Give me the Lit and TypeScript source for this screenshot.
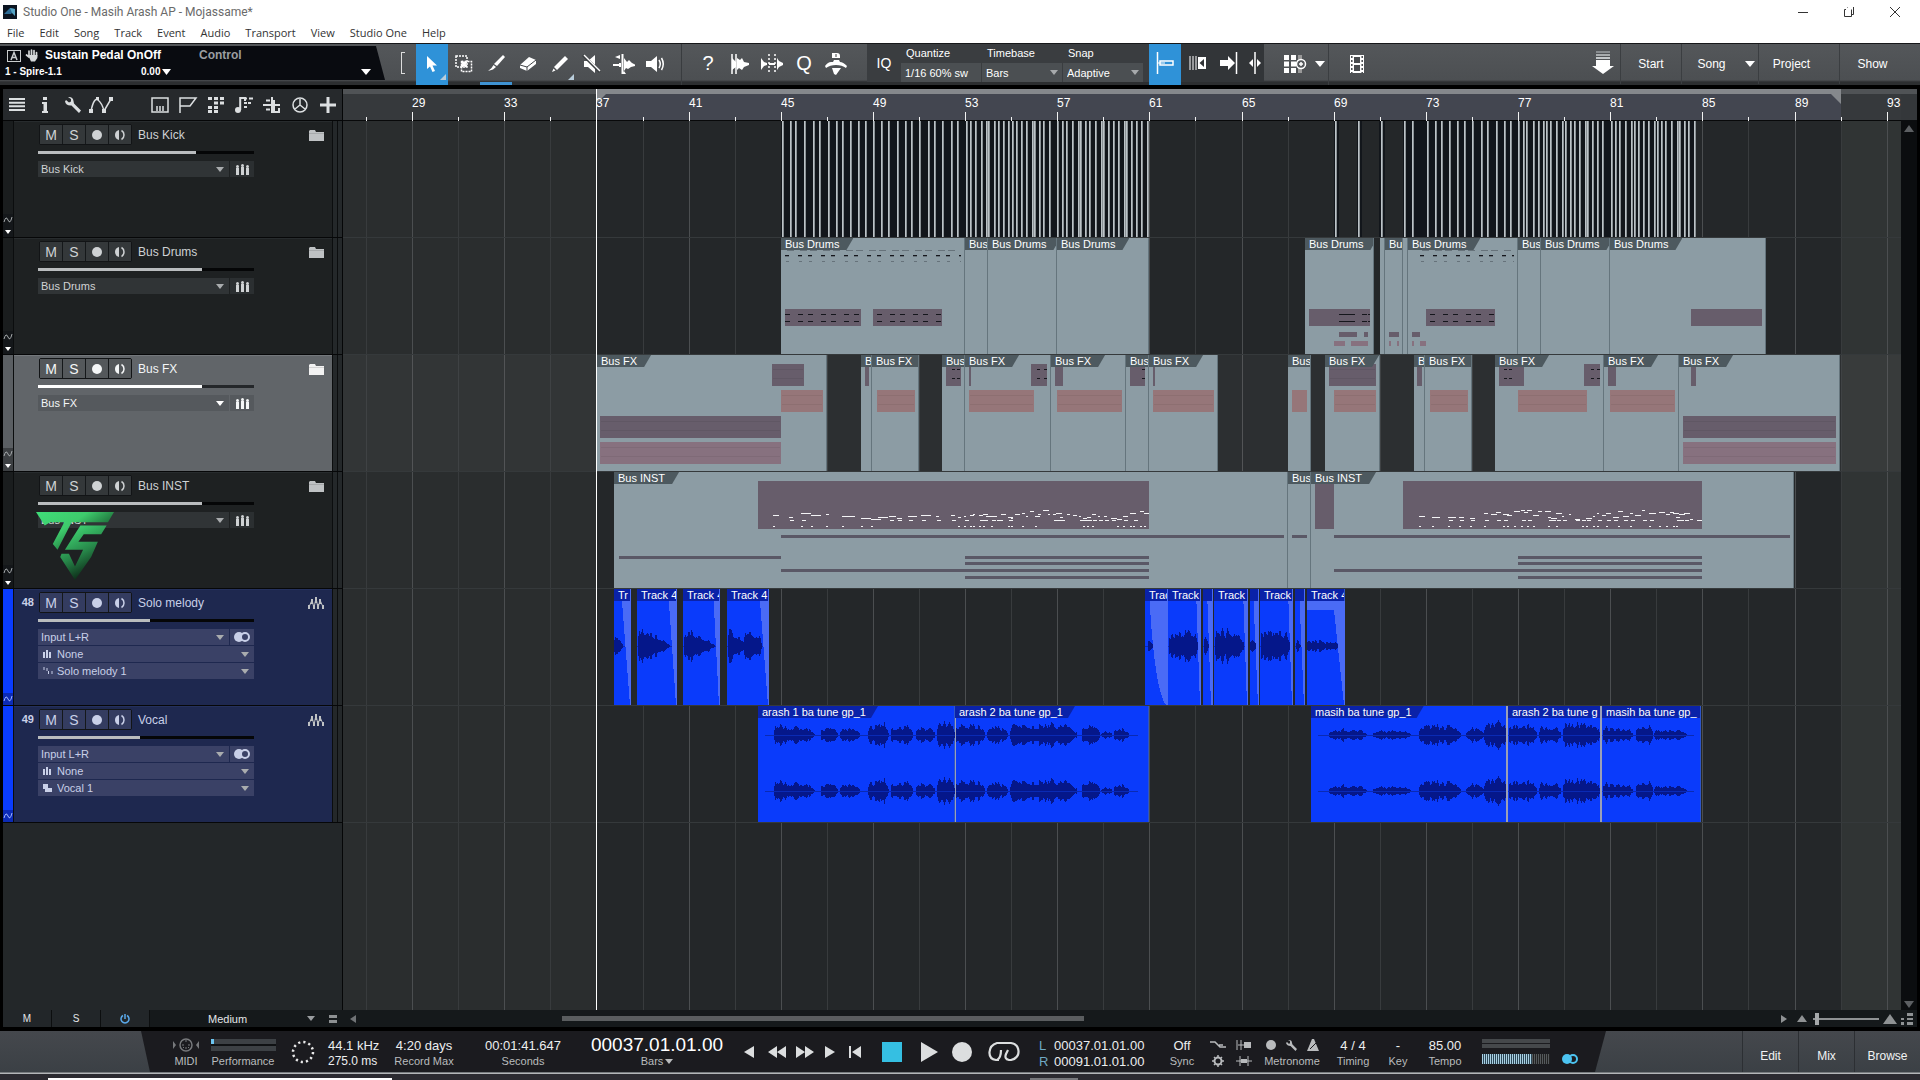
import { LitElement, html, css, svg, nothing } from "lit";
import { customElement, property, state } from "lit/decorators.js";
import { classMap } from "lit/directives/class-map.js";
import { styleMap } from "lit/directives/style-map.js";

/* ---------- song geometry ---------- */

// Song pixel shown at the left edge of the lanes, bar number found there, zoom.
const SCROLL = 343;
const FIRST_BAR = 26;
const LAST_BAR = 93;
const BAR_WIDTH = 23.04;
const barX = (bar: number) => Math.round((bar - FIRST_BAR) * BAR_WIDTH);

type Rect = [x1: number, x2: number, y1: number, y2: number, tone: string];
interface Clip { from: number; to: number; label?: string; }
interface Wave { from: number; to: number; mid: number; amp: number; decay?: boolean; }
interface Track {
  name: string; number?: number; kind: "folder" | "audio"; level: number; selected?: boolean;
  preset?: string;
}

const tracks: Track[] = [
  { name: "Bus Kick", kind: "folder", level: 73 },
  { name: "Bus Drums", kind: "folder", level: 76 },
  { name: "Bus FX", kind: "folder", level: 76, selected: true },
  { name: "Bus INST", kind: "folder", level: 76 },
  { name: "Solo melody", number: 48, kind: "audio", level: 52, preset: "wave" },
  { name: "Vocal", number: 49, kind: "audio", level: 47, preset: "steps" },
];

const kicks = [
  782, 790, 795, 804, 813, 819, 828, 836, 842, 850, 858, 865, 873, 881, 888, 897, 905, 911, 919, 928, 934, 942,
  951, 957, 966, 970, 975, 981, 986, 988, 994, 998, 1003, 1008, 1012, 1016, 1021, 1026, 1032, 1034, 1039, 1043,
  1049, 1057, 1062, 1066, 1072, 1078, 1080, 1085, 1089, 1095, 1101, 1103, 1108, 1113, 1118, 1124, 1126, 1131,
  1136, 1141, 1147, 1335, 1358, 1381, 1404, 1412, 1427, 1435, 1441, 1449, 1457, 1464, 1472, 1481, 1487, 1496,
  1504, 1510, 1518, 1523, 1526, 1533, 1538, 1543, 1546, 1550, 1556, 1562, 1565, 1570, 1574, 1579, 1585, 1587,
  1592, 1597, 1602, 1611, 1615, 1619, 1625, 1631, 1634, 1638, 1643, 1648, 1654, 1657, 1661, 1665, 1671, 1677,
  1679, 1684, 1688, 1694,
];

const clip = (from: number, to: number, label?: string): Clip => ({ from, to, label });

const drumClips = [
  clip(781, 965, "Bus Drums"), clip(965, 988, "Bus"), clip(988, 1057, "Bus Drums"), clip(1057, 1149, "Bus Drums"),
  clip(1305, 1374, "Bus Drums"), clip(1380, 1385), clip(1385, 1403, "Bu"), clip(1403, 1408),
  clip(1408, 1518, "Bus Drums"), clip(1518, 1541, "Bus"), clip(1541, 1610, "Bus Drums"), clip(1610, 1766, "Bus Drums"),
];
const fxClips = [
  clip(597, 827, "Bus FX"), clip(861, 872, "B"), clip(872, 919, "Bus FX"), clip(942, 965, "Bus"),
  clip(965, 1051, "Bus FX"), clip(1051, 1126, "Bus FX"), clip(1126, 1149, "Bus"), clip(1149, 1218, "Bus FX"),
  clip(1288, 1311, "Bus"), clip(1325, 1380, "Bus FX"), clip(1414, 1425, "B"), clip(1425, 1472, "Bus FX"),
  clip(1495, 1604, "Bus FX"), clip(1604, 1679, "Bus FX"), clip(1679, 1840, "Bus FX"),
];
const instClips = [clip(614, 1288, "Bus INST"), clip(1288, 1311, "Bus"), clip(1311, 1794, "Bus INST")];
const soloClips = [
  clip(614, 631, "Tr"), clip(637, 677, "Track 4"), clip(683, 720, "Track 4"), clip(727, 769, "Track 4"),
  clip(1145, 1168, "Trac"), clip(1168, 1201, "Track"), clip(1203, 1213), clip(1214, 1248, "Track"),
  clip(1250, 1259), clip(1260, 1293, "Track"), clip(1295, 1305), clip(1307, 1345, "Track 4"),
];
const vocalClips = [
  clip(758, 955, "arash 1 ba tune gp_1"), clip(955, 1149, "arash 2 ba tune gp_1"),
  clip(1311, 1507, "masih ba tune gp_1"), clip(1508, 1601, "arash 2 ba tune g"), clip(1602, 1701, "masih ba tune gp_"),
];

const rects = (pairs: number[][], y1: number, y2: number, tone: string): Rect[] =>
  pairs.map(([a, b]) => [a, b, y1, y2, tone]);

const drumParts: Rect[] = [
  ...rects([[785, 861], [873, 942], [1309, 1370], [1426, 1495], [1691, 1762]], 71, 88, "plum"),
  ...rects([[1339, 1357], [1364, 1368], [1389, 1399], [1412, 1420]], 94, 99, "plum"),
  ...rects([[1334, 1345], [1351, 1368], [1389, 1391], [1397, 1399], [1412, 1414], [1420, 1426]], 103, 108, "mauve"),
  ...rects([[1339, 1355], [1362, 1367], [1368, 1370]], 76, 77, "ink"),
  ...rects([[1339, 1355], [1362, 1367], [1368, 1370]], 83, 84, "ink"),
];
const fxHits = [952, 957, 1037, 1044, 1142, 1504, 1509, 1591, 1597];
const fxParts: Rect[] = [
  ...rects([[772, 804], [865, 869], [946, 961], [969, 971], [1031, 1047], [1055, 1063], [1130, 1145], [1153, 1155],
    [1329, 1376], [1417, 1422], [1499, 1524], [1584, 1600], [1608, 1616], [1691, 1696]], 9, 31, "plum"),
  ...rects([[781, 823], [877, 915], [969, 1034], [1057, 1122], [1153, 1214], [1292, 1307], [1334, 1376], [1430, 1468],
    [1518, 1587], [1610, 1675]], 35, 57, "rose"),
  ...rects([[600, 781], [1683, 1836]], 61, 83, "plum"),
  ...rects([[600, 781], [1683, 1836]], 87, 109, "mauve"),
  ...rects(fxHits.map((x) => [x, x + 3]), 14, 15, "ink"),
  ...rects(fxHits.map((x) => [x, x + 3]), 23, 24, "ink"),
];
const instParts: Rect[] = [
  ...rects([[758, 1149], [1315, 1334], [1403, 1702]], 9, 57, "plum"),
  ...rects([[781, 1284], [1292, 1307], [1334, 1790]], 63, 66, "line"),
  ...rects([[619, 781], [965, 1149], [1518, 1702]], 84, 87, "line"),
  ...rects([[965, 1149], [1518, 1702]], 90, 93, "line"),
  ...rects([[781, 1149], [1334, 1702]], 97, 100, "line"),
  ...rects([[965, 1149], [1518, 1702]], 104, 107, "line"),
];

const wave = (from: number, to: number, mid: number, amp: number, decay = false): Wave => ({ from, to, mid, amp, decay });
const soloWaves = [
  wave(614, 623, 57, 24, true), wave(638, 670, 57, 30, true), wave(684, 715, 57, 29, true),
  wave(728, 746, 57, 29, true), wave(744, 762, 57, 18), wave(1148, 1153, 57, 14, true), wave(1169, 1198, 57, 21),
  wave(1204, 1209, 57, 14, true), wave(1215, 1244, 57, 19), wave(1250, 1256, 57, 10), wave(1261, 1290, 57, 21),
  wave(1296, 1301, 57, 12, true), wave(1307, 1327, 57, 8), wave(1326, 1338, 57, 6),
];
const phrases: number[][] = [
  [774, 815, 11], [821, 838, 9], [840, 860, 9], [868, 889, 13], [891, 913, 12], [916, 935, 10], [937, 955, 19],
  [955, 985, 14], [987, 1008, 11], [1010, 1077, 14], [1082, 1100, 14], [1101, 1112, 5], [1114, 1129, 8],
  [1329, 1367, 7], [1373, 1411, 6], [1419, 1461, 12], [1466, 1484, 9], [1484, 1507, 18], [1509, 1537, 14],
  [1539, 1561, 11], [1563, 1601, 16], [1603, 1633, 10], [1636, 1653, 14], [1654, 1687, 8],
];
const vocalWaves = phrases.flatMap(([a, b, amp]) => [wave(a, b, 29, amp), wave(a, b, 85, amp)]);

/** Repeatable noise in 0..1 for a song pixel. */
const noise = (n: number) => {
  const v = Math.sin(n * 12.9898 + 4.1) * 43758.5453;
  return v - Math.floor(v);
};

const waveShape = (w: Wave) => {
  const top: string[] = [];
  const bottom: string[] = [];
  const len = w.to - w.from;
  for (let i = 0; i <= len; i++) {
    const t = i / len;
    const env = w.decay ? Math.min(1, t * 6 + 0.35) * Math.pow(1 - t, 0.8) : Math.min(1, t * 8 + 0.5, (1 - t) * 5 + 0.2);
    const a = Math.max(1, Math.round(w.amp * env * (0.4 + 0.6 * Math.pow(noise(w.from + i), 2.2))));
    top.push(`${w.from + i},${w.mid - a}`);
    bottom.unshift(`${w.from + i},${w.mid + a}`);
  }
  return svg`<polygon class="wave" points=${[...top, ...bottom].join(" ")} />`;
};

/** Melody thumbnail: sparse phrases first, a busier line from `dense` on. */
const noteMarks = (from: number, to: number, dense: number) => {
  const out = [];
  let x = from;
  let n = from;
  while (x < to - 3) {
    const busy = x > dense;
    const drift = Math.round(Math.sin(x / 19) * 2);
    const len = 2 + Math.floor(noise(n) * (busy ? 5 : 9));
    const y = 46 + drift - Math.floor(noise(n + 3) * (busy ? 7 : 4));
    out.push(svg`<rect class="note" x=${x} y=${y} width=${Math.min(len, to - x)} height="1" />`);
    if (noise(n + 11) > 0.5) out.push(svg`<rect class="note" x=${x + 1} y="48" width=${Math.min(4, to - x - 1)} height="1" />`);
    if (noise(n + 5) > 0.55) out.push(svg`<rect class="note" x=${x} y="54" width="2" height="1" />`);
    x += busy ? 3 + Math.floor(noise(n + 9) * 5) : 7 + Math.floor(noise(n + 9) * 10);
    n++;
  }
  return out;
};

/** The paired hits that repeat once per bar. */
const hits = (from: number, to: number, y: number, w: number, tone: string) => {
  const out = [];
  for (let x = from; x < to; x += 23) {
    out.push(svg`<rect class=${tone} x=${x} y=${y} width=${Math.min(w, to - x)} height="1" />`);
    if (x + 13 < to) out.push(svg`<rect class=${tone} x=${x + 13} y=${y} width=${Math.min(w, to - x - 13)} height="1" />`);
  }
  return out;
};

/* ---------- icons ---------- */

const icon = (w: number, h: number, body: unknown) =>
  html`<svg class="icon" width=${w} height=${h} viewBox="0 0 ${w} ${h}" aria-hidden="true">${body}</svg>`;
const caret = (w = 8, h = 5) => icon(w, h, svg`<path fill="currentColor" d="M0 0H${w}L${w / 2} ${h}Z" />`);

const F = "currentColor";
const icons = {
  app: icon(14, 14, svg`<rect width="14" height="14" fill="#0b1420"/><path d="M1 9 7 3l5 1-4 5Z" fill="#2b6a94"/><path d="M7 3l5 1v7l-3-3Z" fill="#55a3c4"/>`),
  min: icon(10, 10, svg`<path d="M0 5.500H10" stroke=${F}/>`),
  restore: icon(10, 10, svg`<path d="M3.500 1V.5M.5 2.500V9.500H7.500V2.500M2 2.500H.5M9.500 0V7.500H8" fill="none" stroke=${F}/>`),
  close: icon(10, 10, svg`<path d="M0 0 10 10M10 0 0 10" stroke=${F}/>`),
  boxA: icon(14, 12, svg`<rect x=".5" y=".5" width="13" height="11" fill="none" stroke="#c9ccce"/><path d="M4 10 7 2.500 10 10M5 7.500H9" fill="none" stroke="#c9ccce" stroke-width="1.500"/>`),
  hand: icon(14, 13, svg`<path d="M4 7V2M6.500 6V1M9 6V1.500M11.500 7V3.500M4 8 1.500 6" stroke="#d5d8da" stroke-width="1.700" stroke-linecap="round"/><path d="M3 6H12.400V9L10 12.500H6Z" fill="#d5d8da"/>`),
  arrow: icon(12, 18, svg`<path d="M1 1V14L4 11.500 6.500 17 9 16 6.500 10.500H11Z" fill="#fff"/>`),
  range: icon(18, 18, svg`<rect x="1" y="1" width="11" height="11" fill="none" stroke=${F} stroke-width="1.500" stroke-dasharray="2 1"/><rect x="6.500" y="6.500" width="10" height="10" fill="none" stroke=${F} stroke-width="1.500" stroke-dasharray="2 1"/><path d="M6.500 6.500 11.500 11.500M11.500 6.500 6.500 11.500" stroke=${F} stroke-width="2.500"/>`),
  split: icon(18, 18, svg`<path d="M16 1 18 3 10 12 7 10Z" fill=${F}/><path d="M6.500 11 9 13 6 15.500 1 17 4.500 14Z" fill=${F}/>`),
  eraser: icon(18, 16, svg`<path d="M1 9 10 1 17 4V8L8 15 1 12Z" fill=${F}/><path d="M1 9 8 11 17 4M8 11V15" stroke="#404346" fill="none"/>`),
  pencil: icon(18, 18, svg`<path d="M14 1 17 4 6 15 3 12Z" fill=${F}/><path d="M2.500 13.500 4.500 15.500 1 17Z" fill=${F}/>`),
  mute: icon(18, 18, svg`<path d="M1 6H5L12 0V18L5 12H1Z" fill=${F}/><path d="M0 0 17 17" stroke="#3d4043" stroke-width="3"/><path d="M1 0 17 16" stroke=${F} stroke-width="1.500"/>`),
  bend: icon(22, 20, svg`<path d="M0 11H7M7 9V13M9.500 0V20" stroke=${F} stroke-width="2"/><path d="M2 3 7 1V5Z M11 4 14 8 16 6 19 9 22 10.500V12L18 13 15 15 13 14 11 17Z M9 20 13 20 11 17Z" fill=${F}/>`),
  speaker: icon(20, 18, svg`<path d="M0 6H5L11 1V17L5 12H0Z" fill=${F}/><path d="M13 5Q15.500 9 13 13M15.500 3Q19 9 15.500 15" fill="none" stroke=${F} stroke-width="1.500"/>`),
  strip: icon(18, 20, svg`<path d="M1 0V20M5 0V20" stroke=${F} stroke-width="1.500"/><path d="M1 4 5 8V13L1 16Z M6 4 9 6 11 4 13 8 18 9V11L13 13 11 16 8 14 6 16Z" fill=${F}/>`),
  stretch: icon(22, 20, svg`<path d="M0 4 3 8 6 9V11L3 12 0 16Z M16 4 18 7 22 9V11L18 13 16 16Z" fill=${F}/><path d="M8 0V20M14 0V20" stroke=${F} stroke-width="1.500" stroke-dasharray="2 2"/><path d="M8 10H14" stroke=${F} stroke-width="2"/>`),
  macro: icon(22, 22, svg`<path d="M7 0H12Q15 0 15 3V5H7Z M0 13Q3 9 6 9H8L9 7H14L15 9Q18 9 22 13L21 15Q17 12 11 12T1 15Z M7 15H16L11 22 9 21Z" fill=${F}/><path d="M11 1V4" stroke="#404346"/>`),
  snapLine: icon(18, 22, svg`<path d="M1.500 0V22" stroke="#fff" stroke-width="1.500"/><rect x="4" y="9" width="13" height="4" fill="none" stroke="#fff" stroke-width="1.500"/><path d="M2 11H9" stroke="#fff"/>`),
  snapBars: icon(17, 14, svg`<path d="M1 0V14M4 0V14M7 0V14" stroke=${F} stroke-width="1"/><path d="M9 1H17V13H9Z" fill=${F}/><path d="M15 3V11L10.500 7Z" fill="#303336"/>`),
  snapArrow: icon(18, 22, svg`<path d="M0 8H8V4L15 11 8 18V14H0Z" fill=${F}/><path d="M16.500 0V22" stroke=${F} stroke-width="1.500"/>`),
  snapBoth: icon(12, 22, svg`<path d="M6 0V22" stroke=${F} stroke-width="1.500"/><path d="M4 7V15L0 11Z M8 7V15L12 11Z" fill=${F}/>`),
  grid: icon(22, 18, svg`<path d="M0 0H5V5H0Z M7 0H12V5H7Z M0 6.500H5V11.500H0Z M7 6.500H12V11.500H7Z M0 13H5V18H0Z M7 13H12V18H7Z" fill=${F}/><path d="M14 0H18V5H14Z M14 13H18V18H14Z" fill="#999"/><circle cx="17" cy="9" r="4.500" fill="#54575a" stroke=${F} stroke-width="1.500"/><path d="M15 9H19M17 7V11" stroke=${F} stroke-width="1.500"/>`),
  film: icon(14, 18, svg`<path d="M0 0H14V18H0Z" fill=${F}/><path d="M4 2H10V8H4Z M4 10H10V16H4Z" fill="#484b4e"/><path d="M1.800 1V18M12.200 1V18" stroke="#484b4e" stroke-dasharray="2 2" stroke-width="1.500"/>`),
  drop: icon(22, 24, svg`<path d="M4 0H18V2H4Z" fill="#888c8f"/><path d="M4 3H18V5H4Z" fill="#a8acae"/><path d="M4 6H18V8H4Z" fill="#c4c8ca"/><path d="M4 9H18V15H22L11 23 0 15H4Z" fill="#fff"/>`),
  lines: icon(16, 13, svg`<path d="M0 1H16M0 4.700H16M0 8.300H16M0 12H16" stroke=${F} stroke-width="2"/>`),
  info: icon(6, 16, svg`<path d="M1 0H5V3H1Z M0 5H5V14H6V16H0V14H1.500V7H0Z" fill=${F}/>`),
  wrench: icon(16, 16, svg`<path d="M1 3 4 5.500 6 4.500V2L3 0Q8-.5 8.500 4L9 6.500 16 13.500 14 16 6.500 8.500Q1 9 0 4.500Z" fill=${F}/>`),
  curve: icon(24, 16, svg`<path d="M2 14Q5 0 9 3T15 14L22 2" fill="none" stroke=${F} stroke-width="1.500"/><path d="M0 12H4V16H0Z M7 0H10V3H7Z M13 12H17V16H13Z M20 0H24V4H20Z" fill=${F}/>`),
  keys: icon(18, 16, svg`<rect x="1" y="1" width="16" height="14" fill="none" stroke=${F} stroke-width="1.500"/><path d="M6 9V14M9 9V14M12 9V14" stroke=${F} stroke-width="1.500"/>`),
  flag: icon(18, 16, svg`<path d="M1 16V1H17L11 9H1" fill="none" stroke=${F} stroke-width="1.500"/>`),
  blocks: icon(16, 16, svg`<path d="M0 0H4V3H0Z M6 0H10V3H6Z M12 0H16V3H12Z M6 4.500H10V7.500H6Z M12 4.500H16V7.500H12Z M0 9H4V12H0Z M6 9H10V12H6Z M0 13H4V16H0Z M6 13H10V16H6Z" fill=${F}/>`),
  note: icon(18, 16, svg`<circle cx="3" cy="13" r="3" fill=${F}/><path d="M5.200 13V0M5 1H10V4M10 1.500H12M14 1.500H18M9 6H12M13 6H16M9 10H12" stroke=${F} stroke-width="2" fill="none"/>`),
  lanes: icon(18, 16, svg`<path d="M0 8H17M3 3.500H7M3 12.500H7M9 0V16" stroke=${F} stroke-width="2"/><path d="M11 3V15H16V11" fill="none" stroke=${F} stroke-width="2"/>`),
  clock: icon(16, 16, svg`<circle cx="8" cy="8" r="7" fill="none" stroke=${F} stroke-width="1.500"/><path d="M8 2V8L3 12M8 8 13 12" fill="none" stroke=${F} stroke-width="1.500"/>`),
  plus: icon(16, 16, svg`<path d="M8 0V16M0 8H16" stroke=${F} stroke-width="3"/>`),
  dot: icon(10, 10, svg`<circle cx="5" cy="5" r="5" fill=${F}/>`),
  monitor: icon(10, 10, svg`<path d="M4 0V10Q0 9 0 5T4 0Z" fill=${F}/><path d="M6.500.5Q9 2 9 5T6.500 9.500" fill="none" stroke=${F} stroke-width="1.500"/>`),
  folder: icon(15, 11, svg`<path d="M0 1 1 0H6L7 2H15V11H0Z" fill=${F}/><path d="M0 3.500H15" stroke="#000" stroke-opacity=".12"/>`),
  spectrum: icon(16, 14, svg`<path d="M1 13V9M4 8V3M6 9V13M8 7V1M10 13V8M12 8V3M15 13V9" stroke=${F} stroke-width="2"/><path d="M1 11 4 4 6 12 8 2 10 12 12 4 15 11" fill="none" stroke=${F}/>`),
  faders: icon(13, 11, svg`<path d="M0 4H3V11H0Z M5 3H8V11H5Z M10 4H13V11H10Z" fill=${F}/><circle cx="1.500" cy="2.500" r="1.500" fill=${F}/><circle cx="6.500" cy="1.500" r="1.500" fill=${F}/><circle cx="11.500" cy="2.500" r="1.500" fill=${F}/>`),
  stereo: icon(16, 10, svg`<circle cx="5" cy="5" r="5" fill=${F}/><circle cx="11" cy="5" r="4" fill="#3a4166" stroke=${F} stroke-width="2"/>`),
  smallFaders: icon(8, 8, svg`<path d="M0 2H2V8H0Z M3 0H5V8H3Z M6 2H8V8H6Z" fill=${F}/>`),
  sparks: icon(10, 8, svg`<path d="M1 0V3M4 1V4M5.500 4V7M9 4V7" stroke=${F} stroke-width="1"/>`),
  steps: icon(10, 8, svg`<path d="M0 0H5V4H9V8H2V5H0Z" fill=${F}/>`),
  zig: icon(8, 6, svg`<path d="M0 5Q2-2 4 3T8 0" fill="none" stroke=${F}/>`),
  power: icon(10, 10, svg`<path d="M3 1.500A4 4 0 1 0 7 1.500M5 0V5" fill="none" stroke="#5aa9ea" stroke-width="1.500"/>`),
  list: icon(8, 8, svg`<path d="M0 0H8V3H0Z M0 5H8V8H0Z" fill=${F}/>`),
  left: icon(6, 8, svg`<path d="M6 0V8L0 4Z" fill=${F}/>`),
  right: icon(6, 8, svg`<path d="M0 0V8L6 4Z" fill=${F}/>`),
  up: icon(10, 7, svg`<path d="M0 7H10L5 0Z" fill=${F}/>`),
  upBig: icon(14, 10, svg`<path d="M0 10H14L7 0Z" fill=${F}/>`),
  corner: icon(12, 12, svg`<path d="M6 0H12V3H6Z M6 5H12V7H6Z M0 9H3V12H0Z M0 5H3V7H0Z M6 9H12V12H6Z" fill=${F}/>`),
  midi: icon(26, 14, svg`<circle cx="13" cy="7" r="6" fill="none" stroke=${F} stroke-width="1.500"/><path d="M0 3 3 7 0 11Z M26 3 23 7 26 11Z" fill=${F}/><path d="M9 7H11M15 7H17M10 10 11 9M15 9 16 10M13 9V11M12 3H14" stroke=${F}/>`),
  ring: icon(26, 26, svg`<circle cx="13" cy="13" r="10" fill="none" stroke="#e8e8e8" stroke-width="2.500" stroke-dasharray="2.200 3.036"/>`),
  back: icon(10, 12, svg`<path d="M10 0V12L0 6Z" fill=${F}/>`),
  rew: icon(18, 12, svg`<path d="M9 0V12L0 6Z M18 0V12L9 6Z" fill=${F}/>`),
  fwd: icon(18, 12, svg`<path d="M0 0V12L9 6Z M9 0V12L18 6Z" fill=${F}/>`),
  next: icon(10, 12, svg`<path d="M0 0V12L10 6Z" fill=${F}/>`),
  start: icon(12, 12, svg`<path d="M12 0V12L3 6Z M0 0H2V12H0Z" fill=${F}/>`),
  stop: icon(20, 20, svg`<rect width="20" height="20" fill="#35bfe2"/>`),
  play: icon(17, 20, svg`<path d="M0 0V20L17 10Z" fill=${F}/>`),
  record: icon(20, 20, svg`<circle cx="10" cy="10" r="10" fill=${F}/>`),
  loop: icon(32, 22, svg`<path d="M11 19H8Q1 18 1.500 11T9 2H23Q30 3 30.500 10T23 19H21Q16 18 18 13L20 9M9 19Q13 17 13 9" fill="none" stroke=${F} stroke-width="2.200"/>`),
  sync1: icon(16, 8, svg`<path d="M0 1H5L10 6H16M9 4H13" fill="none" stroke=${F} stroke-width="1.500"/>`),
  sync2: icon(16, 10, svg`<path d="M1 0V10M5 0V10M2 5H8" stroke=${F}/><path d="M8 2H15V8H8Z" fill=${F}/>`),
  gear: icon(12, 12, svg`<circle cx="6" cy="6" r="3.500" fill="none" stroke=${F} stroke-width="2"/><path d="M6 0V2M6 10V12M0 6H2M10 6H12M2 2 3 3M9 9 10 10M10 2 9 3M3 9 2 10" stroke=${F} stroke-width="1.500"/>`),
  punch: icon(16, 10, svg`<path d="M0 5H16M4 0V10M12 0V10" stroke=${F}/><path d="M5 3H11V7H5Z" fill=${F}/>`),
  tool: icon(11, 11, svg`<path d="M1 2 3 4 4 3V1L2 0Q6-.5 6 3L6.500 4.500 11 9 9.500 11 4.500 6Q1 6 0 3Z" fill=${F}/>`),
  click: icon(12, 12, svg`<path d="M5 0H7L12 12H0Z" fill=${F}/><path d="M3 10 10 3" stroke="#1b1b1f"/>`),
  phones: icon(16, 10, svg`<circle cx="5" cy="5" r="5" fill="#4cc3f0"/><circle cx="11" cy="5" r="4" fill="none" stroke="#4cc3f0" stroke-width="2"/>`),
};

/* ---------- lane content ---------- */

const laneBodies = [
  () => svg`
    <rect class="pit" x="781" y="0" width="368" height="116" />
    <rect class="pit" x="1334" y="0" width="5" height="116" /><rect class="pit" x="1357" y="0" width="5" height="116" />
    <rect class="pit" x="1379" y="0" width="6" height="116" /><rect class="pit" x="1403" y="0" width="292" height="116" />
    ${kicks.map((x) => svg`<rect class="kick" x=${x} y="0" width="1" height="116" /><rect class="kick soft" x=${x + 1} y="0" width="1" height="116" />`)}`,
  () => svg`${bodies(drumClips)}${parts(drumParts)}
    ${hits(785, 859, 76, 5, "ink")}${hits(785, 859, 83, 5, "ink")}${hits(877, 942, 76, 5, "ink")}${hits(877, 942, 83, 5, "ink")}
    ${hits(1430, 1495, 76, 5, "ink")}${hits(1430, 1495, 83, 5, "ink")}
    ${hits(787, 961, 12, 7, "dash")}${hits(785, 961, 17, 4, "ink")}${hits(785, 961, 18, 4, "dash")}${hits(786, 961, 23, 3, "dash")}
    ${hits(1422, 1514, 12, 7, "dash")}${hits(1420, 1514, 17, 4, "ink")}${hits(1420, 1514, 18, 4, "dash")}${hits(1421, 1514, 23, 3, "dash")}`,
  () => svg`${bodies(fxClips)}${parts(fxParts)}
    ${fxParts.filter((r) => r[4] !== "ink" && r[1] - r[0] > 26).map(([a, b, y]) =>
      svg`<path class="seam" d="M${a + 1} ${y + 5}.500H${b - 1}M${a + 1} ${y + 14}.500H${b - 1}" />`)}`,
  () => svg`${bodies(instClips)}${parts(instParts)}${noteMarks(773, 1149, 945)}${noteMarks(1419, 1702, 1480)}`,
  () => svg`${bodies(soloClips, "blue")}
    ${soloClips.map(({ from, to }) => svg`<path class="mid" d="M${from} 57.500H${to}" />`)}
    <path class="fade" d="M621 0H631V116H630Z M668 0H677V116H676Z M713 0H720V116H719Z M759 0H769V116H768Z" />
    <path class="fade" d="M1149 0H1168V116H1166Q1154 100 1149 0Z M1196 0H1201V116H1200Z M1207 0H1213V116H1211Z M1243 0H1248V116H1247Z" />
    <path class="fade" d="M1253 0H1259V116H1258Z M1288 0H1293V116H1292Z M1299 0H1305V116H1304Z M1307 12H1345V116H1344L1334 21H1307Z" />
    ${soloWaves.map(waveShape)}`,
  () => svg`${bodies(vocalClips, "blue")}${vocalWaves.map(waveShape)}
    <path class="mid" d="M765 29.500H1138M765 85.500H1138M1318 29.500H1694M1318 85.500H1694" />
    <path class="cut" d="M955 0H956V116H955Z M1506 0H1508V116H1506Z M1600 0H1602V116H1600Z" />`,
];
const laneClips: Clip[][] = [[], drumClips, fxClips, instClips, soloClips, vocalClips];

function bodies(clips: Clip[], tone = "grey") {
  return clips.map(({ from, to }) => svg`
    <rect class=${tone} x=${from} y="0" width=${to - from} height="116" />
    <rect class="${tone}-edge" x=${to - 1} y="0" width="1" height="116" />`);
}
function parts(list: Rect[]) {
  return list.map(([a, b, y1, y2, tone]) => svg`<rect class=${tone} x=${a} y=${y1} width=${b - a} height=${y2 - y1} />`);
}

const base = css`
  * { box-sizing: border-box; }
  :host { font-family: "Liberation Sans", Arial, sans-serif; font-size: 12px; color: #dfe2e4; }
  button, select, input { font: inherit; color: inherit; margin: 0; padding: 0; border: 0; background: none; border-radius: 0; }
  button { display: flex; align-items: center; justify-content: center; cursor: pointer; }
  select { appearance: none; width: 100%; min-width: 0; }
  .icon { display: block; flex: none; overflow: visible; }
  .field { display: grid; align-items: center; min-width: 0; }
  .field > * { grid-area: 1 / 1; }
  .field > .icon { justify-self: end; pointer-events: none; }
`;

/* ---------- track header ---------- */

@customElement("track-header")
class TrackHeader extends LitElement {
  @property({ attribute: false }) track!: Track;

  static styles = [base, css`
    :host { display: block; }
    .row { display: grid; grid-template-columns: 10px 1fr 4px 4px; column-gap: 1px; height: 117px; background: #0b0d0e; border-bottom: 1px solid #060708; }
    .strip { display: flex; flex-direction: column; justify-content: flex-end; background: #1a1d1e; color: #a5a9ab; }
    .mini { height: 12px; width: 10px; background: #14171a; color: #a5a9ab; }
    .mini.open { color: #fff; height: 11px; }
    .gap { background: #24282a; }
    .body { display: grid; grid-template-columns: 20px 216px 1fr; column-gap: 4px; background: #1e2122; align-content: start; padding: 2px 8px 0 0; color: #cfd2d4; border-top: 1px solid #272b2d; }
    .audio .body { background: #1e284f; color: #c9d0e8; border-top-color: #24305c; }
    .audio .strip { background: #0a3cff; }
    .audio .mini { background: #0c2bb5; color: #9fb4ff; }
    .selected .body { background: #616569; color: #f4f6f7; border-top-color: #74787c; }
    .selected .strip { background: #5b5f63; }
    .selected .mini { background: #3c3f42; }
    .number { font-size: 11px; font-weight: 700; text-align: right; line-height: 21px; }
    .main { display: flex; flex-direction: column; }
    .top { display: flex; gap: 6px; align-items: center; height: 21px; }
    .buttons { display: flex; gap: 1px; background: #15181a; border: 1px solid #121416; border-radius: 2px; margin-left: 1px; }
    .buttons button { width: 22px; height: 19px; background: #34383a; font-size: 14px; }
    .audio .buttons button { background: #343c60; }
    .selected .buttons button { background: #54585b; }
    .name { white-space: nowrap; }
    .level { appearance: none; display: block; width: 216px; height: 3px; margin: 6px 0 7px; background: linear-gradient(90deg, #b9bcbe var(--level), #050607 var(--level)); }
    .selected .level { background: linear-gradient(90deg, #fff var(--level), #24272a var(--level)); }
    .level::-webkit-slider-thumb { appearance: none; width: 4px; height: 3px; background: transparent; }
    .slots { display: flex; flex-direction: column; gap: 1px; font-size: 11px; }
    .slot { display: flex; gap: 1px; height: 16px; }
    .slot .field { flex: 1; background: #303436; padding: 0 5px 0 3px; }
    .slot .field.iconed select { padding-left: 16px; }
    .slot .field > .icon.icon { color: #a9acae; }
    .slot .field > .kind { justify-self: start; pointer-events: none; padding-left: 2px; }
    .slot button { width: 24px; background: #2b2f31; }
    .audio .slot .field, .audio .slot button { background: #3a4166; }
    .selected .slot .field, .selected .slot button { background: #55595d; }
    .selected .slot .field > .icon.icon { color: #fff; }
    .side { display: flex; justify-content: flex-end; height: 22px; align-items: center; color: #bfc2c4; }
    .selected .side { color: #f2f2f2; }
  `];

  private slotRow(label: string, value: string, kind?: unknown, button?: unknown) {
    return html`<div class="slot">
      <div class=${classMap({ field: true, iconed: !!kind })}>
        <select aria-label=${label}><option>${value}</option></select>
        ${kind ? html`<span class="kind">${kind}</span>` : nothing}
        ${caret()}
      </div>
      ${button ?? nothing}
    </div>`;
  }

  render() {
    const t = this.track;
    const audio = t.kind === "audio";
    return html`<div class=${classMap({ row: true, audio, selected: !!t.selected })}>
      <div class="strip">
        <button class="mini" aria-label="Show automation of ${t.name}">${icons.zig}</button>
        ${audio ? nothing : html`<button class="mini open" aria-label="Open ${t.name}">${caret(6, 4)}</button>`}
      </div>
      <div class="body">
        <span class="number">${t.number ?? ""}</span>
        <div class="main">
          <div class="top">
            <div class="buttons">
              <button aria-label="Mute ${t.name}">M</button><button aria-label="Solo ${t.name}">S</button>
              <button aria-label="Record ${t.name}">${icons.dot}</button><button aria-label="Monitor ${t.name}">${icons.monitor}</button>
            </div>
            <span class="name">${t.name}</span>
          </div>
          <input class="level" type="range" min="0" max="100" .value=${String(t.level)} aria-label="Volume of ${t.name}" style=${styleMap({ "--level": `${t.level}%` })} />
          <div class="slots">
            ${audio
              ? html`${this.slotRow("Input", "Input L+R", undefined, html`<button aria-label="Stereo">${icons.stereo}</button>`)}
                  ${this.slotRow("Instrument", "None", icons.smallFaders)}
                  ${this.slotRow("Take layer", `${t.name} 1`, t.preset === "wave" ? icons.sparks : icons.steps)}`
              : this.slotRow("Bus", t.name, undefined, html`<button aria-label="Channel of ${t.name}">${icons.faders}</button>`)}
          </div>
        </div>
        <div class="side">${audio ? icons.spectrum : icons.folder}</div>
      </div>
      <div class="gap"></div><div class="gap"></div>
    </div>`;
  }
}

/* ---------- arrangement ---------- */

@customElement("arrange-view")
class ArrangeView extends LitElement {
  static styles = [base, css`
    :host { display: flex; flex-direction: column; position: relative; min-width: 0; overflow: hidden; background: #242729; }
    .ruler { position: relative; height: 32px; flex: none; background: linear-gradient(#505356 0 5px, #36393c 5px 31px, #08090a 31px); overflow: hidden; }
    .loop { position: absolute; top: 0; height: 31px; background: linear-gradient(#85888c 0 5px, #434650 5px); }
    .marks { position: absolute; inset: 0; width: 100%; height: 100%; }
    .tick { fill: #f2f2f2; }
    .handle { fill: #85888c; }
    .bar { position: absolute; top: 7px; line-height: 14px; font-size: 12px; color: #fff; }
    .canvas { position: relative; flex: 1; display: flex; flex-direction: column; }
    .grid { position: absolute; inset: 0; width: 100%; height: 100%; }
    .grid .minor { fill: #383b3d; }
    .grid .major { fill: #4b4e50; }
    .outer { fill: #2a2d2e; }
    .tail { fill: #303434; }
    .lane { position: relative; height: 117px; border-bottom: 1px solid #35393b; overflow: hidden; }
    .lane.selected { background: rgb(255 255 255 / 4%); }
    .art { position: absolute; inset: 0; width: 100%; height: 116px; shape-rendering: crispEdges; }
    .grey { fill: #8c9ca4; } .grey-edge { fill: #65757d; }
    .blue { fill: #0a3bfb; } .blue-edge { fill: #2e56c8; }
    .plum { fill: #675d6b; } .mauve { fill: #87717f; } .rose { fill: #967679; } .line { fill: #5a5866; }
    .ink { fill: #15161c; } .dash { fill: #66727a; } .note { fill: #f4f4f6; }
    .seam { stroke: #000; stroke-opacity: .06; }
    .pit { fill: #12161b; } .kick { fill: #bcc3c7; } .kick.soft { fill: #8a9195; }
    .wave { fill: #05178a; } .mid { stroke: #0a2ab4; } .fade { fill: #4a6bf6; } .cut { fill: #9aa0b8; }
    .tag { position: absolute; top: 0; height: 12px; overflow: hidden; font-size: 11px; line-height: 12px; white-space: nowrap; color: #fff; }
    .tag span { display: inline-block; height: 12px; padding: 0 14px 0 4px; background: #4d595f; clip-path: polygon(0 0, 100% 0, calc(100% - 7px) 100%, 0 100%); vertical-align: top; }
    .tag.audio span { background: #0a22a8; padding-right: 12px; }
    .tag.tight { background: #4d595f; }
    .tag.tight span { padding-right: 0; clip-path: none; background: none; }
    .tag.audio.tight { background: #0a22a8; }
    .playhead { position: absolute; top: 0; bottom: 0; width: 1px; background: #fff; }
  `];

  render() {
    const bars: number[] = [];
    for (let b = 27; b <= LAST_BAR; b += 2) bars.push(b);
    const major = (b: number) => (b - 29) % 4 === 0;
    const start = barX(37);
    const end = barX(91);
    return html`
      <div class="ruler">
        <div class="loop" style=${styleMap({ left: `${start}px`, width: `${end - start}px` })}></div>
        <svg class="marks" aria-hidden="true">
          <path class="handle" d="M${start} 5h10l-10 10Z M${end} 5h-10l10 10Z" />
          ${bars.map((b) => svg`<rect class="tick" x=${barX(b)} y=${major(b) ? 23 : 28} width="1" height="9" />`)}
        </svg>
        ${bars.filter(major).map((b) => html`<span class="bar" style=${styleMap({ left: `${barX(b)}px` })}>${b}</span>`)}
      </div>
      <div class="canvas">
        <svg class="grid" aria-hidden="true">
          <rect class="outer" width=${start} height="100%" />
          <rect class="tail" x=${end} width="100%" height="100%" />
          ${bars.map((b) => svg`<rect class=${major(b) ? "major" : "minor"} x=${barX(b)} width="1" height="100%" />`)}
        </svg>
        ${laneBodies.map((body, i) => html`<div class=${classMap({ lane: true, selected: !!tracks[i].selected })}>
          <svg class="art" aria-hidden="true"><g transform="translate(${-SCROLL} 0)">${body()}</g></svg>
          ${laneClips[i].filter((c) => c.label || i === 4).map((c) => html`
            <div class=${classMap({ tag: true, audio: i > 3, tight: c.to - c.from < 43 })} style=${styleMap({ left: `${c.from - SCROLL}px`, width: `${c.to - c.from - 1}px` })}>${c.label ? html`<span>${c.label}</span>` : nothing}</div>`)}
        </div>`)}
      </div>
      <div class="playhead" style=${styleMap({ left: `${start}px` })}></div>`;
  }
}

/* ---------- application ---------- */

@customElement("app-root")
class AppRoot extends LitElement {
  @state() private tool = "Arrow";

  static styles = [base, css`
    :host { display: flex; flex-direction: column; min-height: 100vh; background: #000; overflow: hidden; }
    .title, .menu { display: flex; align-items: center; background: #fff; font-family: "Open Sans", "Noto Sans", sans-serif; }
    .title { height: 23px; padding-left: 3px; gap: 6px; color: #6a6a6a; font-size: 12px; font-family: Roboto, "Open Sans", sans-serif; }
    .title h1 { font: inherit; margin: 0; flex: 1; }
    .title button { width: 46px; height: 20px; color: #333; margin-left: -6px; }
    .title button:last-child { margin-right: 2px; }
    .menu { height: 20px; padding-left: 7px; gap: 15px; color: #333; font-size: 11px; }
    .menu button { line-height: 18px; }

    .toolbar { display: flex; height: 42px; background: linear-gradient(#54575a, #4c4f52 36px, #2c2e30 38px); border-top: 1px solid #17181a; color: #fff; }
    .display { display: grid; grid-template-columns: 136px 53px 1fr 16px; align-content: center; width: 385px; height: 34px; margin: 2px 17px 0 0; padding: 0 8px 0 5px; background: #090b10; clip-path: polygon(0 0, 376px 0, 100% 100%, 0 100%); font-weight: 700; line-height: 15px; align-items: center; }
    .display .param { grid-column: 1 / 3; display: flex; gap: 4px; align-items: center; font-size: 12px; padding-left: 2px; line-height: 17px; }
    .display .param span { padding-left: 2px; }
    .display .ctl { color: #9b9ea1; padding-left: 5px; grid-column: 3 / 5; }
    .display .small { font-size: 10px; }
    .display .val { display: flex; gap: 2px; align-items: center; }
    .display .more { grid-column: 4; }
    .grip { width: 4px; height: 22px; margin: 8px 11px 0 -1px; border: 1px solid #ddd; border-right: 0; align-self: flex-start; }
    .tools { display: flex; }
    .tools button { position: relative; width: 32px; height: 41px; font-size: 20px; padding-bottom: 2px; }
    .tools .active { background: #2f92d8; }
    .tools .second { border-bottom: 3px solid #3f92d2; padding: 0; }
    .tools .more::after { content: ""; position: absolute; right: 2px; bottom: 5px; border: 3px solid transparent; border-right-color: #b9cddb; border-bottom-color: #b9cddb; }
    .group { margin-right: 9px; }
    .help { border-left: 1px solid #393c3f; padding: 0 15px 0 10px; }
    .quant { display: flex; background: #3a3d40; height: 38px; }
    .quant .iq { width: 34px; font-size: 14px; }
    .quant .fields { display: grid; grid-template-columns: repeat(3, 80px); column-gap: 1px; padding-right: 6px; font-size: 11px; }
    .quant label { display: grid; grid-template-rows: 19px 19px; }
    .quant .cap { padding-left: 5px; line-height: 19px; }
    .quant .field { background: #4b4f52; padding: 0 4px 0 4px; }
    .quant .icon { color: #a7aaac; }
    .snaps button { background: #323538; height: 38px; padding: 0; }
    .snaps button.active { background: #2f92d8; height: 41px; padding-bottom: 3px; }
    .snaps button:last-child { width: 19px; }
    .tools .wide { width: 65px; gap: 9px; padding-left: 16px; border-right: 1px solid #3b3e41; }
    .tools .film { width: 56px; }
    .pages { display: flex; margin-left: auto; }
    .pages > * { border-left: 1px solid #3b3e41; height: 40px; }
    .pages .drop { border: 0; width: 34px; height: 38px; }
    .pages .start { width: 61px; } .pages .song { width: 60px; } .pages .down { width: 17px; border: 0; }
    .pages .project { width: 81px; padding-right: 15px; } .pages .show { width: 81px; padding-right: 15px; }

    .work { flex: 1; display: grid; grid-template-columns: 340px minmax(0, 1fr) 16px; column-gap: 0; padding: 4px 3px 0; }
    .panel { display: flex; flex-direction: column; background: #232729; border-right: 1px solid #050607; }
    .tabs { display: flex; align-items: center; height: 32px; background: #26292c; border-bottom: 1px solid #050607; color: #dcdfe1; }
    .tabs button { width: 28px; height: 28px; }
    .tabs .push { margin-left: auto; }
    .rest { flex: 1; background: #232729; }
    .side { display: flex; flex-direction: column; justify-content: space-between; align-items: center; background: linear-gradient(#505356 0 5px, #34373a 5px 31px, #0b0d0f 31px); padding: 36px 0 2px; color: #5c5f62; }
    .side .flip { transform: rotate(180deg); }

    .foot { display: flex; align-items: center; height: 17px; margin: 0 3px; background: #15191b; font-size: 11px; color: #e4e6e8; }
    .foot .ms { width: 49px; height: 17px; background: #222629; border-right: 1px solid #0c0e0f; font-size: 10px; }
    .foot .size { width: 171px; padding: 0 6px 0 58px; color: #9a9da0; }
    .foot .size select { color: #e4e6e8; }
    .foot .lay { width: 24px; height: 17px; color: #8d9092; }
    .foot .prev { width: 16px; height: 17px; color: #707376; }
    .track { flex: 1; padding: 0 0 0 201px; }
    .thumb { width: 522px; height: 5px; background: #5a5d5f; }
    .zoom { display: flex; align-items: center; gap: 4px; color: #8f9294; padding-right: 4px; }
    .zoom button { width: 14px; height: 15px; }
    .zoom input { appearance: none; width: 66px; height: 2px; background: #8f9294; }
    .zoom input::-webkit-slider-thumb { appearance: none; width: 4px; height: 12px; background: #a5a8aa; }

    .transport { display: flex; height: 43px; margin-top: 4px; background: linear-gradient(#45484d, #3b4045 41px, #b4b6b8 42px); }
    .transport .desk { margin-left: 141px; width: 1465px; flex: none; height: 41px; background: #1b1b1f; clip-path: polygon(0 0, 100% 0, calc(100% - 11px) 100%, 9px 100%); display: grid; padding-left: 23px;
      grid-template-columns: 44px 70px 50px 60px 72px 126px 142px 8px 26px 29px 27px 24px 26px 48px 26px 40px 44px 134px 44px 27px 25px 72px 50px 40px 54px 10px 1fr; align-items: start; }
    .cell { display: grid; grid-template-rows: 16px 16px; justify-items: center; align-items: center; padding-top: 6px; white-space: nowrap; font-size: 13px; color: #eceeef; }
    .cell .cap { font-size: 11px; color: #b9bbbd; display: flex; align-items: center; gap: 2px; }
    .cell.start { justify-items: start; }
    .cell .mid { font-size: 12px; }
    .cell .big { font-size: 19px; color: #fff; }
    .desk > button { height: 41px; color: #dcdedf; }
    .desk > .ringed { display: grid; place-items: center; height: 41px; }
    .lr { padding-left: 13px; }
    .lr > span { display: flex; gap: 7px; }
    .lr b { font-weight: 400; color: #6fa9c4; width: 8px; }
    .cell .trio { display: flex; gap: 10px; align-items: center; color: #b9bbbd; }
    .cell .icon { color: #b9bbbd; }
    .dim .icon.icon { color: #77797c; }
    .perf { width: 65px; height: 12px; background: linear-gradient(#3d4145 0 5px, #101214 5px 7px, #3d4145 7px); border-left: 3px solid transparent; box-shadow: inset 0 0 0 0 #000; position: relative; }
    .perf::before { content: ""; position: absolute; left: -3px; top: 0; width: 3px; height: 5px; background: #6cc5f0; }
    .meters { display: grid; grid-template-columns: 68px 28px; row-gap: 6px; padding-top: 8px; align-items: center; justify-items: start; }
    .meters .idle { width: 68px; height: 9px; background: linear-gradient(#45484b 0 4px, #1b1b1f 4px 5px, #45484b 5px); }
    .meters .busy { grid-row: 2; width: 68px; height: 10px; background: repeating-linear-gradient(90deg, #a9cfe2 0 1px, #2c4756 1px 2px) 0 0 / 50px 100% no-repeat, repeating-linear-gradient(90deg, #55595c 0 1px, #222 1px 2px); }
    .meters .icon { grid-row: 2; justify-self: end; }
    .views { display: flex; margin-left: auto; }
    .views button { width: 56px; height: 41px; padding-top: 8px; border-left: 1px solid #2c2f33; color: #f2f3f4; font-size: 12px; }
    .views button:last-child { width: 66px; }
    .task { display: flex; gap: 638px; height: 6px; background: #2b2a30; padding: 4px 0 0 48px; }
    .task i { width: 344px; height: 2px; background: #fff; }
    .task i + i { width: 48px; background: #77787c; }

    .mark { position: absolute; left: 36px; top: 512px; width: 78px; height: 68px; pointer-events: none; }
  `];

  private toolButton(name: string, glyph: unknown, extra = "") {
    return html`<button aria-label=${name} class="${this.tool === name ? "active" : ""} ${extra}" @click=${() => (this.tool = name)}>${glyph}</button>`;
  }

  private quantField(label: string, value: string, arrow = true) {
    return html`<label><span class="cap">${label}</span>
      <span class="field"><select><option>${value}</option></select>${arrow ? caret() : nothing}</span></label>`;
  }

  private cell(top: unknown, bottom: unknown, cls = "") {
    return html`<div class="cell ${cls}"><span>${top}</span><span class="cap">${bottom}</span></div>`;
  }

  render() {
    return html`
      <header class="title">
        ${icons.app}
        <h1>Studio One - Masih Arash AP - Mojassame*</h1>
        <button aria-label="Minimize">${icons.min}</button><button aria-label="Restore">${icons.restore}</button><button aria-label="Close">${icons.close}</button>
      </header>
      <nav class="menu">
        ${["File", "Edit", "Song", "Track", "Event", "Audio", "Transport", "View", "Studio One", "Help"].map((m) => html`<button>${m}</button>`)}
      </nav>

      <div class="toolbar">
        <div class="display">
          <div class="param">${icons.boxA}${icons.hand}<span>Sustain Pedal OnOff</span></div>
          <div class="ctl">Control</div>
          <div class="small">1 - Spire-1.1</div>
          <div class="small val">0.00 ${caret(9, 6)}</div>
          <div class="more">${caret(10, 6)}</div>
        </div>
        <div class="grip"></div>
        <div class="tools group">
          ${this.toolButton("Arrow", icons.arrow, "more")}${this.toolButton("Range", icons.range)}
          ${this.toolButton("Split", icons.split, "second")}${this.toolButton("Eraser", icons.eraser)}
          ${this.toolButton("Paint", icons.pencil, "more")}${this.toolButton("Mute", icons.mute)}
          ${this.toolButton("Bend", icons.bend)}${this.toolButton("Listen", icons.speaker)}
        </div>
        <div class="tools help">
          <button aria-label="Help">?</button><button aria-label="Strip silence">${icons.strip}</button>
          <button aria-label="Audio bend">${icons.stretch}</button><button aria-label="Quantize">Q</button>
          <button aria-label="Macros">${icons.macro}</button>
        </div>
        <div class="quant">
          <button class="iq">IQ</button>
          <div class="fields">
            ${this.quantField("Quantize", "1/16 60% sw", false)}${this.quantField("Timebase", "Bars")}${this.quantField("Snap", "Adaptive")}
          </div>
        </div>
        <div class="tools snaps">
          <button class="active" aria-label="Snap">${icons.snapLine}</button><button aria-label="Snap to events">${icons.snapBars}</button>
          <button aria-label="Autoscroll">${icons.snapArrow}</button><button aria-label="Cursor follows edit">${icons.snapBoth}</button>
        </div>
        <div class="tools">
          <button class="wide" aria-label="Grid">${icons.grid}${caret(10, 6)}</button>
          <button class="film" aria-label="Video">${icons.film}</button>
        </div>
        <div class="pages">
          <button class="drop" aria-label="Drop">${icons.drop}</button>
          <button class="start">Start</button><button class="song">Song</button><button class="down" aria-label="Songs">${caret(10, 6)}</button>
          <button class="project">Project</button><button class="show">Show</button>
        </div>
      </div>

      <main class="work">
        <section class="panel">
          <div class="tabs">
            <button aria-label="Track list">${icons.lines}</button><button aria-label="Inspector">${icons.info}</button>
            <button aria-label="Options">${icons.wrench}</button><button aria-label="Automation">${icons.curve}</button>
            <button class="push" aria-label="Keys">${icons.keys}</button><button aria-label="Markers">${icons.flag}</button>
            <button aria-label="Arranger">${icons.blocks}</button><button aria-label="Chords">${icons.note}</button>
            <button aria-label="Signature">${icons.lanes}</button><button aria-label="Tempo">${icons.clock}</button>
            <button aria-label="Add track">${icons.plus}</button>
          </div>
          ${tracks.map((t) => html`<track-header .track=${t}></track-header>`)}
          <div class="rest"></div>
        </section>
        <arrange-view></arrange-view>
        <div class="side">${icons.up}<span class="flip">${icons.up}</span></div>
      </main>

      <div class="foot">
        <button class="ms">M</button><button class="ms">S</button><button class="ms" aria-label="Power">${icons.power}</button>
        <div class="field size"><select aria-label="Track height"><option>Medium</option></select>${caret()}</div>
        <button class="lay" aria-label="Layers">${icons.list}</button>
        <button class="prev" aria-label="Scroll left">${icons.left}</button>
        <div class="track"><div class="thumb"></div></div>
        <div class="zoom">
          <button aria-label="Scroll right">${icons.right}</button><button aria-label="Zoom out">${icons.up}</button>
          <input type="range" min="0" max="100" value="3" aria-label="Zoom" />
          <button aria-label="Zoom in">${icons.upBig}</button>${icons.corner}
        </div>
      </div>

      <footer class="transport">
        <div class="desk">
          ${this.cell(icons.midi, "MIDI", "dim")}
          ${this.cell(html`<div class="perf"></div>`, "Performance")}
          <div class="ringed">${icons.ring}</div>
          <div class="cell start"><span>44.1 kHz</span><span class="mid">275.0 ms</span></div>
          ${this.cell("4:20 days", "Record Max")}
          ${this.cell("00:01:41.647", "Seconds")}
          ${this.cell(html`<span class="big">00037.01.01.00</span>`, html`Bars${caret(8, 5)}`)}
          <span></span>
          <button aria-label="Previous marker">${icons.back}</button><button aria-label="Rewind">${icons.rew}</button>
          <button aria-label="Forward">${icons.fwd}</button><button aria-label="Next marker">${icons.next}</button>
          <button aria-label="Return to zero">${icons.start}</button><button aria-label="Stop">${icons.stop}</button>
          <button aria-label="Play">${icons.play}</button><button aria-label="Record">${icons.record}</button>
          <button aria-label="Loop">${icons.loop}</button>
          <div class="cell start lr"><span><b>L</b>00037.01.01.00</span><span><b>R</b>00091.01.01.00</span></div>
          ${this.cell("Off", "Sync")}
          ${this.cell(icons.sync1, icons.gear)}
          ${this.cell(icons.sync2, icons.punch)}
          ${this.cell(html`<div class="trio">${icons.dot}${icons.tool}${icons.click}</div>`, "Metronome")}
          ${this.cell("4 / 4", "Timing")}
          ${this.cell("-", "Key")}
          ${this.cell("85.00", "Tempo")}
          <span></span>
          <div class="meters"><div class="idle"></div><div class="busy"></div>${icons.phones}</div>
        </div>
        <div class="views"><button>Edit</button><button>Mix</button><button>Browse</button></div>
      </footer>
      <div class="task"><i></i><i></i></div>

      <svg class="mark" viewBox="0 0 232 202" aria-hidden="true">
        <defs>
          <linearGradient id="leaf" x1="0" y1="0" x2="1" y2=".7">
            <stop offset="0" stop-color="#3fdc78" /><stop offset=".45" stop-color="#3ecb6c" /><stop offset=".8" stop-color="#1c6a37" /><stop offset="1" stop-color="#0d2a18" />
          </linearGradient>
          <linearGradient id="stem" gradientUnits="userSpaceOnUse" x1="90" y1="60" x2="160" y2="190">
            <stop offset="0" stop-color="#3fd070" /><stop offset=".5" stop-color="#27884a" /><stop offset="1" stop-color="#0a2012" />
          </linearGradient>
        </defs>
        <path fill="url(#leaf)" d="M0 0H232L214 30H106L64 112 50 95 84 30H42L26 40Z" />
        <path fill="url(#stem)" d="M132 40H210L194 66H142L126 88H184L164 134 116 202 72 134 76 124H98L116 162 140 112H86Z" />
      </svg>`;
  }
}
